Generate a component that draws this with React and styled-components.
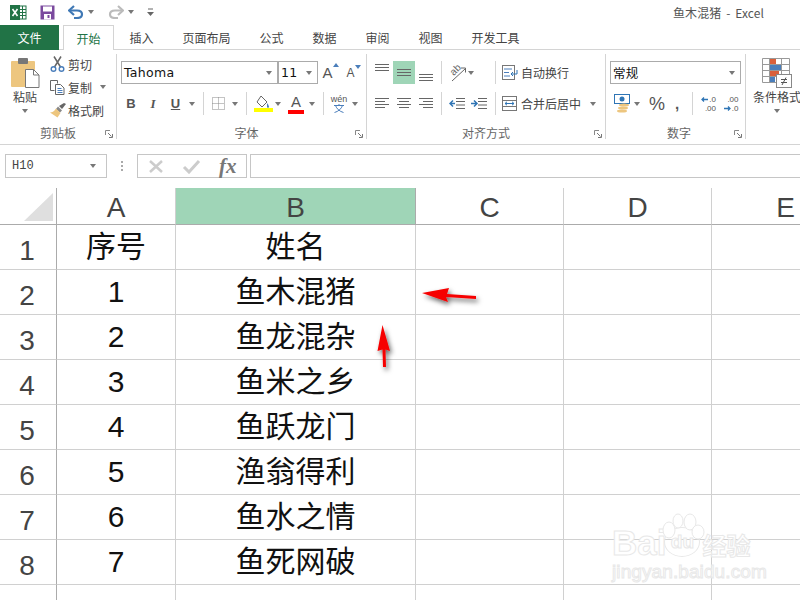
import React from 'react';
import styled, { createGlobalStyle } from 'styled-components';

const GlobalStyle = createGlobalStyle`
    html, body { margin: 0; padding: 0; background: #fff; }
    body { font-family: "Liberation Sans", "Noto Sans CJK SC", sans-serif; }
`;

const Page = styled.div`
    position: relative;
    width: 800px;
    height: 600px;
    overflow: hidden;
    background: #fff;
    color: #444;
    font-size: 12px;
`;

const TitleBar = styled.div`
    display: flex;
    align-items: center;
    justify-content: space-between;
    height: 25px;
    padding: 0 36px 1px 0;
    box-sizing: border-box;
`;

const Quick = styled.div`
    display: flex;
    align-items: center;
`;

const Title = styled.div`
    font-family: "Noto Sans CJK SC", sans-serif;
    font-size: 12px;
    word-spacing: 2px;
    letter-spacing: 0.1px;
    color: #555;
`;

const TabBar = styled.div`
    display: flex;
    height: 25px;
    box-sizing: border-box;
    border-bottom: 1px solid #d4d4d4;
    font-family: "Noto Sans CJK SC", sans-serif;
`;

const FileTab = styled.div`
    width: 59px;
    height: 25px;
    margin-right: 4px;
    background: #217346;
    color: #fff;
    display: flex;
    align-items: center;
    justify-content: center;
`;

const Tab = styled.div`
    height: 24px;
    padding: 0 14.5px;
    display: flex;
    align-items: center;
    white-space: nowrap;
    box-sizing: border-box;
    color: #444;
`;

const ActiveTab = styled.div`
    width: 51px;
    height: 25px;
    margin-right: 1px;
    display: flex;
    align-items: center;
    justify-content: center;
    white-space: nowrap;
    box-sizing: border-box;
    color: #217346;
    background: #fff;
    border: 1px solid #d4d4d4;
    border-bottom: 0;
`;

const Ribbon = styled.div`
    display: flex;
    height: 95px;
    box-sizing: border-box;
    padding: 4px 0 5px;
    border-bottom: 1px solid #d4d4d4;
`;

const Group = styled.div`
    position: relative;
    flex: none;
    width: ${p => p.$w}px;
    box-sizing: border-box;
    border-right: ${p => (p.$last ? '0' : '1px solid #d4d4d4')};
    display: flex;
    flex-direction: column;
`;

const GroupBody = styled.div`
    flex: 1;
    display: flex;
    min-height: 0;
`;

const GroupLabel = styled.div`
    height: 14px;
    line-height: 16px;
    text-align: center;
    font-family: "Noto Sans CJK SC", sans-serif;
    color: #666;
    padding-left: ${p => p.$pl || 0}px;
`;

const Launcher = styled.svg`
    position: absolute;
    right: 3px;
    bottom: 1px;
    width: 8px;
    height: 8px;
`;

const Rows = styled.div`
    display: flex;
    flex-direction: column;
    gap: 8px;
    padding-top: 7px;
`;

const ToolRow = styled.div`
    display: flex;
    align-items: center;
    height: 23px;
`;

const Tool = styled.div`
    flex: none;
    width: ${p => p.$w}px;
    height: ${p => p.$h || 23}px;
    display: flex;
    align-items: center;
    justify-content: center;
    background: ${p => (p.$on ? '#9fd5b7' : 'transparent')};
`;

const Sep = styled.div`
    flex: none;
    width: ${p => p.$w || 10}px;
    height: 23px;
    display: flex;
    justify-content: center;
    &::before {
        content: '';
        width: 1px;
        background: #d4d4d4;
    }
`;

const Caret = styled.span`
    flex: none;
    display: inline-block;
    width: 0;
    height: 0;
    margin-left: ${p => p.$ml || 0}px;
    border-left: 3.5px solid transparent;
    border-right: 3.5px solid transparent;
    border-top: 4px solid #777;
`;

const Combo = styled.div`
    flex: none;
    width: ${p => p.$w}px;
    height: 23px;
    box-sizing: border-box;
    border: 1px solid #ababab;
    margin-left: ${p => p.$ml || 0}px;
    padding: 0 5px 0 2px;
    display: flex;
    align-items: center;
    justify-content: space-between;
    color: #111;
    font-size: 12.5px;
    letter-spacing: 0.3px;
    font-family: ${p => (p.$cjk ? '"Noto Sans CJK SC", sans-serif' : '"DejaVu Sans", sans-serif')};
`;

const PasteColumn = styled.div`
    width: ${p => p.$w}px;
    flex: none;
    display: flex;
    flex-direction: column;
    align-items: center;
    padding-top: 4px;
`;

const BigLabel = styled.div`
    margin: 2px 0 5px;
    line-height: 14px;
    white-space: nowrap;
    font-family: "Noto Sans CJK SC", sans-serif;
`;

const SmallTools = styled.div`
    display: flex;
    flex-direction: column;
    gap: 3px;
`;

const SmallTool = styled.div`
    height: 20px;
    display: flex;
    align-items: center;
    font-family: "Noto Sans CJK SC", sans-serif;
    white-space: nowrap;
`;

const IconBox = styled.span`
    flex: none;
    width: ${p => p.$w || 18}px;
    display: inline-flex;
    justify-content: flex-start;
`;

const FontGlyph = styled.span`
    font-family: ${p => (p.$serif ? '"Liberation Serif", serif' : '"Liberation Sans", sans-serif')};
    font-size: ${p => p.$size || 14}px;
    font-weight: ${p => (p.$bold ? 700 : 400)};
    font-style: ${p => (p.$italic ? 'italic' : 'normal')};
    text-decoration: ${p => (p.$under ? 'underline' : 'none')};
    line-height: 1;
    color: #555;
`;

const GrowBox = styled.div`
    display: flex;
    align-items: flex-start;
    line-height: 1;
`;

const GrowMark = styled.svg`
    width: 6px;
    height: 4px;
    margin-top: -2px;
`;

const ColorStack = styled.div`
    display: flex;
    flex-direction: column;
    align-items: center;
    width: 16px;
`;

const ColorBar = styled.div`
    width: 100%;
    height: 4px;
    margin-top: 1px;
    background: ${p => p.$color};
`;

const WenStack = styled.div`
    display: flex;
    flex-direction: column;
    align-items: center;
    line-height: 9px;
    font-size: 9px;
    color: #555;
`;

const OrientBox = styled.div`
    position: relative;
    width: 17px;
    height: 18px;
`;

const OrientText = styled.span`
    position: absolute;
    left: 1px;
    top: 0;
    font-size: 10px;
    line-height: 12px;
    color: #666;
    transform: rotate(-45deg);
`;

const OrientLine = styled.svg`
    position: absolute;
    left: 0;
    top: 0;
    width: 17px;
    height: 18px;
`;

const DecimalBox = styled.div`
    width: 17px;
    font-size: 8px;
    color: #555;
`;

const DecimalLine = styled.div`
    display: flex;
    height: 9px;
    line-height: 9px;
    justify-content: flex-end;
    align-items: center;
`;

const DecimalArrow = styled.svg`
    flex: none;
    width: 7px;
    height: 7px;
    margin-right: 1px;
`;

const FormulaBar = styled.div`
    display: flex;
    align-items: stretch;
    height: 24px;
    margin: 9px 0 10px;
    padding-left: 5px;
`;

const NameBox = styled.div`
    width: 102px;
    box-sizing: border-box;
    border: 1px solid #c6c6c6;
    display: flex;
    align-items: center;
    justify-content: space-between;
    padding: 0 10px 0 6px;
    font-family: "Liberation Mono", monospace;
    font-size: 12px;
    color: #444;
`;

const Dots = styled.div`
    width: 30px;
    display: flex;
    flex-direction: column;
    align-items: center;
    justify-content: center;
    gap: 2px;
    span { width: 2px; height: 2px; background: #aaa; }
`;

const FxBox = styled.div`
    width: 110px;
    box-sizing: border-box;
    border: 1px solid #c6c6c6;
    display: flex;
    align-items: center;
    padding-left: 10px;
`;

const FxMark = styled.svg`
    flex: none;
    margin-left: ${p => p.$ml || 0}px;
`;

const FxText = styled.span`
    font-family: "Liberation Serif", serif;
    font-style: italic;
    font-weight: 700;
    font-size: 21px;
    color: #777;
    margin-left: 17px;
`;

const FormulaInput = styled.div`
    flex: 1;
    margin-left: 3px;
    box-sizing: border-box;
    border: 1px solid #c6c6c6;
    border-right: 0;
`;

const Sheet = styled.div`
    display: grid;
    grid-template-columns: 57px 119px 240px 148px 148px 148px;
    grid-template-rows: 37px;
    grid-auto-rows: 45px;
`;

const Cell = styled.div`
    box-sizing: border-box;
    border-right: 1px solid #d0d0d0;
    border-bottom: 1px solid #d0d0d0;
    display: flex;
    align-items: center;
    justify-content: center;
    font-family: "Liberation Sans", "Noto Sans CJK SC", sans-serif;
    font-size: 30px;
    color: #111;
    line-height: 1;
`;

const CornerCell = styled(Cell)`
    border-right-color: #ababab;
    border-bottom-color: #ababab;
    justify-content: flex-end;
    align-items: flex-end;
    padding: 0 3px 3px 0;
`;

const ColHead = styled(Cell)`
    font-size: 28px;
    color: #444;
    padding-top: 3px;
    border-bottom-color: #ababab;
    border-right-color: ${p => (p.$on ? '#ababab' : '#d0d0d0')};
    background: ${p => (p.$on ? '#9fd5b7' : '#fff')};
`;

const RowHead = styled(Cell)`
    font-size: 28px;
    color: #444;
    border-right-color: #ababab;
    padding: 8px 2px 0 0;
`;

const Overlay = styled.svg`
    position: absolute;
    left: 370px;
    top: 270px;
    width: 130px;
    height: 110px;
    overflow: visible;
`;

const Watermark = styled.div`
    position: absolute;
    left: 612px;
    top: 513px;
    width: 160px;
    color: #fff;
    -webkit-text-stroke: 1px #e8e8e8;
    font-family: "Liberation Sans", sans-serif;
`;

const MarkTop = styled.div`
    display: flex;
    align-items: flex-end;
    height: 48px;
    font-size: 35px;
    font-weight: 700;
    line-height: 36px;
    white-space: nowrap;
`;

const MarkCjk = styled.span`
    font-family: "Noto Sans CJK SC", sans-serif;
    font-size: 24px;
    line-height: 32px;
    margin-left: 2px;
`;

const MarkUrl = styled.div`
    font-size: 19px;
    line-height: 22px;
    letter-spacing: 0.1px;
    white-space: nowrap;
`;

const MarkCircle = styled.div`
    flex: none;
    width: 36px;
    height: 30px;
    margin: 0 0 4px -2px;
    box-sizing: border-box;
    border: 1px solid #e8e8e8;
    border-radius: 50%;
    font-size: 19px;
    line-height: 28px;
    text-align: center;
`;

const Paw = styled.svg`
    position: absolute;
    left: 45px;
    top: 0;
`;

const FlipSvg = styled.svg`
    transform: ${p => (p.$flip ? 'scaleX(-1)' : 'none')};
`;

const ExcelIcon = () => (
    <svg width="17" height="15" viewBox="0 0 17 15">
        <rect x="6" y="1" width="10" height="13" fill="#fff" stroke="#217346" />
        <path d="M9 4.500h7M9 7.500h7M9 10.500h7M12.500 1v13" stroke="#217346" />
        <rect x="0" y="0" width="10" height="15" fill="#217346" />
        <path d="M2.500 4l5 7M7.500 4l-5 7" stroke="#fff" strokeWidth="1.600" />
    </svg>
);

const SaveIcon = () => (
    <svg width="15" height="15" viewBox="0 0 15 15">
        <rect x="0.500" y="0.500" width="14" height="14" fill="#7b4a9e" />
        <rect x="3" y="1.500" width="9" height="5" fill="#fff" />
        <rect x="4" y="9" width="7" height="5.500" fill="#fff" />
        <rect x="7.500" y="10" width="2" height="3" fill="#7b4a9e" />
    </svg>
);

const UndoIcon = ({ color, flip }) => (
    <FlipSvg $flip={flip} width="16" height="14" viewBox="0 0 16 14">
        <path d="M2 5.500h7c3 0 5 1.500 5 3.700S12 13 9 13H6" fill="none" stroke={color} strokeWidth="2.200" />
        <path d="M6 1L1 5.500 6 10" fill="none" stroke={color} strokeWidth="2.200" />
    </FlipSvg>
);

const CustomizeIcon = () => (
    <svg width="7" height="9" viewBox="0 0 7 9">
        <path d="M1 1h5" stroke="#666" />
        <path d="M0 4h7L3.500 8z" fill="#666" />
    </svg>
);

const LauncherIcon = () => (
    <Launcher viewBox="0 0 8 8">
        <path d="M0.500 5V0.500H5" fill="none" stroke="#888" />
        <path d="M3 3l3.500 3.500M7.500 4v3.500H4" fill="none" stroke="#777" />
    </Launcher>
);

const PasteIcon = () => (
    <svg width="29" height="30" viewBox="0 0 29 30">
        <rect x="0" y="3" width="24" height="26" rx="1" fill="#edc67f" />
        <rect x="7" y="0" width="10" height="6" rx="1" fill="#777" />
        <path d="M14.500 11.500h8l5.500 5.500v12.500h-13.500z" fill="#fff" stroke="#777" />
        <path d="M22.500 11.500v5.500h5.500" fill="none" stroke="#777" />
    </svg>
);

const CutIcon = () => (
    <svg width="15" height="16" viewBox="0 0 15 16">
        <path d="M4 0.500L10.500 11M11 0.500L4.500 11" stroke="#666" strokeWidth="1.500" />
        <circle cx="3.500" cy="13" r="2.300" fill="none" stroke="#4a7ebb" strokeWidth="1.400" />
        <circle cx="11.500" cy="13" r="2.300" fill="none" stroke="#4a7ebb" strokeWidth="1.400" />
    </svg>
);

const CopyIcon = () => (
    <svg width="15" height="15" viewBox="0 0 15 15">
        <path d="M0.500 0.500h7v3M0.500 0.500v10h4" fill="none" stroke="#666" />
        <path d="M5.500 4.500h5l3.500 3.500v6.500H5.500z" fill="#fff" stroke="#666" />
        <path d="M7.500 8.500h4M7.500 10.500h5M7.500 12.500h5" stroke="#4a7ebb" />
    </svg>
);

const BrushIcon = () => (
    <svg width="16" height="15" viewBox="0 0 16 15">
        <path d="M9 3l3 3 4-5-2-1z" fill="#666" />
        <path d="M8 3.500l4 4-2 2L6 6z" fill="#888" />
        <path d="M6 5.500l4.500 4.500-3 4.500L0 9.500c2 0 4-1 6-4z" fill="#edc67f" />
    </svg>
);

const GrowFont = ({ down }) => (
    <GrowBox>
        <FontGlyph $size={down ? 12 : 15}>A</FontGlyph>
        <GrowMark viewBox="0 0 6 4">
            <path d={down ? 'M0 0h6L3 4z' : 'M0 4h6L3 0z'} fill="#4a7ebb" />
        </GrowMark>
    </GrowBox>
);

const BordersIcon = () => (
    <svg width="13" height="13" viewBox="0 0 13 13">
        <path d="M0.500 0.500h12v12h-12zM6.500 0.500v12M0.500 6.500h12" fill="none" stroke="#888" strokeDasharray="1 1" />
    </svg>
);

const FillIcon = () => (
    <svg width="19" height="18" viewBox="0 0 19 18">
        <path d="M7 1l6 6-5 5-5-5z" fill="#fff" stroke="#666" />
        <path d="M13 8c1.500 2 2 3 2 4s-2 1-2 0 0-2 0-4z" fill="#4a7ebb" />
        <rect x="0" y="13" width="19" height="4" fill="#ffff00" />
    </svg>
);

const TextColor = () => (
    <ColorStack>
        <FontGlyph $size={15}>A</FontGlyph>
        <ColorBar $color="#ff0000" />
    </ColorStack>
);

const Phonetic = () => (
    <WenStack>
        <span>wén</span>
        <svg width="12" height="9" viewBox="0 0 12 9">
            <path d="M6 0v1.500M1 1.500h10M2.500 1.500c1 3 4 6 8 7M9.500 1.500c-1 3-4 6-8 7" stroke="#4a7ebb" fill="none" />
        </svg>
    </WenStack>
);

const Lines = ({ rows }) => (
    <svg width="14" height="12" viewBox="0 0 14 12">
        {rows.map(([y, x1, x2]) => (
            <path key={y} d={`M${x1} ${y + 0.5}H${x2}`} stroke="#666" />
        ))}
    </svg>
);

const VAlign = ({ offset }) => (
    <svg width="14" height="17" viewBox="0 0 14 17">
        {[0, 3, 6].map(y => (
            <path key={y} d={`M0 ${y + offset + 0.5}H14`} stroke="#666" />
        ))}
    </svg>
);

const Orient = () => (
    <OrientBox>
        <OrientText>ab</OrientText>
        <OrientLine viewBox="0 0 17 18">
            <path d="M3 17L16 5" stroke="#666" />
            <path d="M12 4h4.500v4.500" fill="none" stroke="#666" />
        </OrientLine>
    </OrientBox>
);

const IndentIcon = ({ right }) => (
    <svg width="16" height="11" viewBox="0 0 16 11">
        <path d="M7 0.500h9M7 3.500h9M7 7h9M7 10.500h9" stroke="#666" />
        {right
            ? <path d="M0 5.500h5M3 2.500l3 3-3 3" fill="none" stroke="#2f75b5" strokeWidth="1.500" />
            : <path d="M1 5.500h5M4 2.500l-3 3 3 3" fill="none" stroke="#2f75b5" strokeWidth="1.500" />}
    </svg>
);

const WrapIcon = () => (
    <svg width="17" height="15" viewBox="0 0 17 15">
        <rect x="0.500" y="0.500" width="12" height="14" fill="none" stroke="#777" />
        <path d="M2 4h8M2 7.500h5M2 11h6" stroke="#4a7ebb" />
        <path d="M9 9h6V5M11 7l-2 2 2 2" fill="none" stroke="#2f75b5" />
    </svg>
);

const MergeIcon = () => (
    <svg width="15" height="15" viewBox="0 0 15 15">
        <rect x="0.500" y="0.500" width="14" height="14" fill="none" stroke="#777" />
        <path d="M0.500 4.500h14M0.500 10.500h14" stroke="#777" />
        <path d="M3 7.500h9M5 5.800L3 7.500l2 1.700M10 5.800l2 1.700-2 1.700" fill="none" stroke="#2f75b5" />
    </svg>
);

const CurrencyIcon = () => (
    <svg width="16" height="19" viewBox="0 0 16 19">
        <rect x="0.500" y="0.500" width="15" height="9" fill="#fff" stroke="#2f75b5" />
        <circle cx="8" cy="5" r="2.500" fill="#2f75b5" />
        <ellipse cx="10" cy="11" rx="5" ry="1.500" fill="#edc67f" />
        <ellipse cx="9" cy="14" rx="5" ry="1.500" fill="#edc67f" />
        <ellipse cx="8" cy="17" rx="5" ry="1.500" fill="#edc67f" />
    </svg>
);

const Decimal = ({ more }) => (
    <DecimalBox>
        {more ? (
            <>
                <DecimalLine>.00</DecimalLine>
                <DecimalLine>
                    <DecimalArrow viewBox="0 0 7 7">
                        <path d="M0 3.500h6M4 1.500l2 2-2 2" fill="none" stroke="#2f75b5" strokeWidth="1.300" />
                    </DecimalArrow>
                    .0
                </DecimalLine>
            </>
        ) : (
            <>
                <DecimalLine>
                    <DecimalArrow viewBox="0 0 7 7">
                        <path d="M1 3.500h6M3 1.500l-2 2 2 2" fill="none" stroke="#2f75b5" strokeWidth="1.300" />
                    </DecimalArrow>
                    .0
                </DecimalLine>
                <DecimalLine>.00</DecimalLine>
            </>
        )}
    </DecimalBox>
);

const CondFormatIcon = () => (
    <svg width="30" height="30" viewBox="0 0 30 30">
        <path d="M0.500 0.500h27v24h-27zM0.500 6.500h27M0.500 12.500h27M0.500 18.500h27M7.500 0.500v24M19.500 0.500v24" fill="none" stroke="#999" />
        <rect x="8" y="1" width="6" height="5" fill="#d9603b" />
        <rect x="8" y="7" width="11" height="5" fill="#4a7ebb" />
        <rect x="8" y="13" width="9" height="5" fill="#d9603b" />
        <rect x="8" y="19" width="5" height="5" fill="#4a7ebb" />
        <rect x="14.500" y="16.500" width="15" height="13" fill="#fff" stroke="#888" />
        <path d="M19 21.500h6M19 24.500h6M24 19.500l-4 7.500" stroke="#555" fill="none" />
    </svg>
);

const Arrows = () => (
    <Overlay viewBox="0 0 130 110">
        <defs>
            <filter id="arrowShadow" x="-30%" y="-60%" width="160%" height="220%">
                <feDropShadow dx="2" dy="3" stdDeviation="2.400" floodColor="#000" floodOpacity="0.6" />
            </filter>
        </defs>
        <g fill="#f60000" filter="url(#arrowShadow)">
            <path d="M52 23L79 18 77 24 106 26 106 29 76 27 78 32z" />
            <path d="M12.500 55L20 81 15.500 79.500 16 97 13 97 12.500 79.500 7.500 81z" />
        </g>
    </Overlay>
);

const WatermarkLogo = () => (
    <Watermark>
        <Paw width="50" height="44" viewBox="0 0 50 44">
            <g fill="#fff" stroke="#e8e8e8">
                <ellipse cx="12" cy="17" rx="6" ry="8" />
                <ellipse cx="21" cy="8" rx="5" ry="7" />
                <ellipse cx="33" cy="9" rx="6" ry="8" />
                <ellipse cx="41" cy="19" rx="6" ry="7" />
            </g>
        </Paw>
        <MarkTop>
            Bai
            <MarkCircle>du</MarkCircle>
            <MarkCjk>经验</MarkCjk>
        </MarkTop>
        <MarkUrl>jingyan.baidu.com</MarkUrl>
    </Watermark>
);

const tabs = ['插入', '页面布局', '公式', '数据', '审阅', '视图', '开发工具'];
const columns = ['A', 'B', 'C', 'D', 'E'];
const people = [
    ['序号', '姓名'],
    ['1', '鱼木混猪'],
    ['2', '鱼龙混杂'],
    ['3', '鱼米之乡'],
    ['4', '鱼跃龙门'],
    ['5', '渔翁得利'],
    ['6', '鱼水之情'],
    ['7', '鱼死网破'],
    ['', ''],
];

const App = () => (
    <Page>
        <GlobalStyle />
        <TitleBar>
            <Quick>
                <Tool $w={36} $h={24}><ExcelIcon /></Tool>
                <Tool $w={22} $h={24}><SaveIcon /></Tool>
                <Tool $w={5} $h={24} />
                <Tool $w={26} $h={24}><UndoIcon color="#3f78b5" /></Tool>
                <Tool $w={4} $h={24}><Caret /></Tool>
                <Tool $w={15} $h={24} />
                <Tool $w={16} $h={24}><UndoIcon color="#bbb" flip /></Tool>
                <Tool $w={14} $h={24}><Caret /></Tool>
                <Tool $w={24} $h={24}><CustomizeIcon /></Tool>
            </Quick>
            <Title>鱼木混猪 - Excel</Title>
        </TitleBar>
        <TabBar>
            <FileTab>文件</FileTab>
            <ActiveTab>开始</ActiveTab>
            {tabs.map(t => <Tab key={t}>{t}</Tab>)}
        </TabBar>
        <Ribbon>
            <Group $w={117}>
                <GroupBody>
                    <PasteColumn $w={50}>
                        <PasteIcon />
                        <BigLabel>粘贴</BigLabel>
                        <Caret />
                    </PasteColumn>
                    <SmallTools>
                        <SmallTool><IconBox><CutIcon /></IconBox>剪切</SmallTool>
                        <SmallTool><IconBox><CopyIcon /></IconBox>复制<Caret $ml={8} /></SmallTool>
                        <SmallTool><IconBox><BrushIcon /></IconBox>格式刷</SmallTool>
                    </SmallTools>
                </GroupBody>
                <GroupLabel>剪贴板</GroupLabel>
                <LauncherIcon />
            </Group>
            <Group $w={250}>
                <GroupBody>
                    <Rows>
                        <ToolRow>
                            <Combo $w={157} $ml={4}>Tahoma<Caret /></Combo>
                            <Combo $w={40}>11<Caret /></Combo>
                            <Tool $w={25}><GrowFont /></Tool>
                            <Tool $w={21}><GrowFont down /></Tool>
                        </ToolRow>
                        <ToolRow>
                            <Tool $w={3} />
                            <Tool $w={22}><FontGlyph $bold $size={13}>B</FontGlyph></Tool>
                            <Tool $w={22}><FontGlyph $serif $italic $bold $size={13}>I</FontGlyph></Tool>
                            <Tool $w={23}><FontGlyph $bold $under $size={13}>U</FontGlyph></Tool>
                            <Tool $w={10}><Caret /></Tool>
                            <Sep $w={12} />
                            <Tool $w={19}><BordersIcon /></Tool>
                            <Tool $w={13}><Caret /></Tool>
                            <Sep />
                            <Tool $w={24}><FillIcon /></Tool>
                            <Tool $w={6}><Caret /></Tool>
                            <Tool $w={5} />
                            <Tool $w={20}><TextColor /></Tool>
                            <Tool $w={12}><Caret /></Tool>
                            <Sep />
                            <Tool $w={22}><Phonetic /></Tool>
                            <Tool $w={10}><Caret /></Tool>
                        </ToolRow>
                    </Rows>
                </GroupBody>
                <GroupLabel $pl={10}>字体</GroupLabel>
                <LauncherIcon />
            </Group>
            <Group $w={239}>
                <GroupBody>
                    <Rows>
                        <ToolRow>
                            <Tool $w={4} />
                            <Tool $w={22}><VAlign offset={0} /></Tool>
                            <Tool $w={22} $on><VAlign offset={5} /></Tool>
                            <Tool $w={22}><VAlign offset={10} /></Tool>
                            <Sep $w={8} />
                            <Tool $w={24}><Orient /></Tool>
                            <Tool $w={4}><Caret /></Tool>
                            <Tool $w={17} />
                            <Sep />
                            <Tool $w={2} />
                            <SmallTool><IconBox $w={19}><WrapIcon /></IconBox>自动换行</SmallTool>
                        </ToolRow>
                        <ToolRow>
                            <Tool $w={4} />
                            <Tool $w={22}><Lines rows={[[0, 0, 14], [3, 0, 10], [6, 0, 14], [9, 0, 10]]} /></Tool>
                            <Tool $w={22}><Lines rows={[[0, 0, 14], [3, 2, 12], [6, 0, 14], [9, 2, 12]]} /></Tool>
                            <Tool $w={22}><Lines rows={[[0, 0, 14], [3, 4, 14], [6, 0, 14], [9, 4, 14]]} /></Tool>
                            <Sep $w={8} />
                            <Tool $w={24}><IndentIcon /></Tool>
                            <Tool $w={20}><IndentIcon right /></Tool>
                            <Sep $w={12} />
                            <Tool $w={1} />
                            <SmallTool><IconBox $w={19}><MergeIcon /></IconBox>合并后居中<Caret $ml={9} /></SmallTool>
                        </ToolRow>
                    </Rows>
                </GroupBody>
                <GroupLabel>对齐方式</GroupLabel>
                <LauncherIcon />
            </Group>
            <Group $w={140}>
                <GroupBody>
                    <Rows>
                        <ToolRow>
                            <Combo $w={131} $ml={4} $cjk>常规<Caret /></Combo>
                        </ToolRow>
                        <ToolRow>
                            <Tool $w={6} />
                            <Tool $w={20}><CurrencyIcon /></Tool>
                            <Tool $w={10}><Caret /></Tool>
                            <Tool $w={5} />
                            <Tool $w={20}><FontGlyph $size={18}>%</FontGlyph></Tool>
                            <Tool $w={20}><FontGlyph $bold $size={15}>,</FontGlyph></Tool>
                            <Sep $w={10} />
                            <Tool $w={21}><Decimal /></Tool>
                            <Tool $w={24}><Decimal more /></Tool>
                        </ToolRow>
                    </Rows>
                </GroupBody>
                <GroupLabel $pl={7}>数字</GroupLabel>
                <LauncherIcon />
            </Group>
            <Group $w={62} $last>
                <GroupBody>
                    <PasteColumn $w={62}>
                        <CondFormatIcon />
                        <BigLabel>条件格式</BigLabel>
                        <Caret />
                    </PasteColumn>
                </GroupBody>
            </Group>
        </Ribbon>
        <FormulaBar>
            <NameBox>H10<Caret /></NameBox>
            <Dots><span /><span /><span /></Dots>
            <FxBox>
                <FxMark width="16" height="15" viewBox="0 0 16 15">
                    <path d="M2 2l12 11M14 2L2 13" stroke="#ccc" strokeWidth="2.500" />
                </FxMark>
                <FxMark $ml={18} width="20" height="15" viewBox="0 0 20 15">
                    <path d="M2 8l5 5 10-11" stroke="#ccc" strokeWidth="3" fill="none" />
                </FxMark>
                <FxText>fx</FxText>
            </FxBox>
            <FormulaInput />
        </FormulaBar>
        <Sheet>
            <CornerCell>
                <svg width="29" height="28" viewBox="0 0 29 28"><path d="M29 0v28H0z" fill="#dfdfdf" /></svg>
            </CornerCell>
            {columns.map(c => <ColHead key={c} $on={c === 'B'}>{c}</ColHead>)}
            {people.map(([num, name], i) => (
                <React.Fragment key={i}>
                    <RowHead>{i + 1}</RowHead>
                    <Cell>{num}</Cell>
                    <Cell>{name}</Cell>
                    <Cell />
                    <Cell />
                    <Cell />
                </React.Fragment>
            ))}
        </Sheet>
        <Arrows />
        <WatermarkLogo />
    </Page>
);

export default App;
